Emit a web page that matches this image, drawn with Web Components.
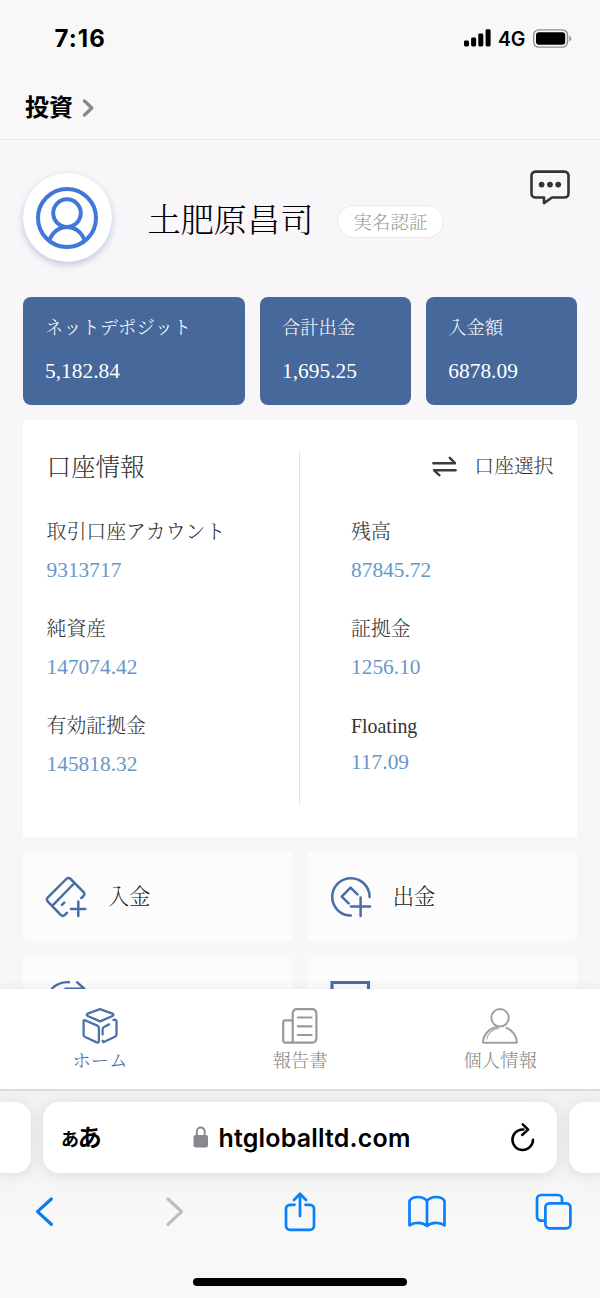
<!DOCTYPE html>
<html lang="ja">
<head>
<meta charset="UTF-8">
<meta name="viewport" content="width=device-width, initial-scale=1.0">
<title>投資</title>
<style>
	html, body {
		margin: 0;
		padding: 0;
	}

	body {
		--serif: "Liberation Serif", "Noto Serif CJK JP", "Noto Sans CJK JP", serif;
		--sans: Inter, "Noto Sans CJK JP", sans-serif;
		--blue: #47689b;
		--link: #6697c8;
		--ink: #333;
		width: 600px;
		height: 1298px;
		overflow: hidden;
		background: #f8f6f8;
		font-family: var(--serif);
	}
</style>
</head>
<body>

<phone-screen>
	<status-bar slot="top" time="7:16" network="4G"></status-bar>
	<app-crumb slot="top">投資</app-crumb>

	<profile-header name="土肥原昌司" badge="実名認証"></profile-header>

	<stat-row>
		<stat-card label="ネットデポジット">5,182.84</stat-card>
		<stat-card label="合計出金">1,695.25</stat-card>
		<stat-card label="入金額">6878.09</stat-card>
	</stat-row>

	<account-panel heading="口座情報" action="口座選択">
		<account-field slot="left" label="取引口座アカウント">9313717</account-field>
		<account-field slot="left" label="純資産">147074.42</account-field>
		<account-field slot="left" label="有効証拠金">145818.32</account-field>
		<account-field slot="right" label="残高">87845.72</account-field>
		<account-field slot="right" label="証拠金">1256.10</account-field>
		<account-field slot="right" label="Floating" latin>117.09</account-field>
	</account-panel>

	<action-grid>
		<action-card icon="deposit">入金</action-card>
		<action-card icon="withdraw">出金</action-card>
		<action-card icon="transfer"></action-card>
		<action-card icon="screen"></action-card>
	</action-grid>

	<tab-bar slot="bottom">
		<tab-item icon="cube" active>ホーム</tab-item>
		<tab-item icon="report">報告書</tab-item>
		<tab-item icon="person">個人情報</tab-item>
	</tab-bar>
	<browser-bar slot="bottom" url="htgloballtd.com"></browser-bar>
</phone-screen>

<script>
const ICONS = {
	signal: [27, 18, `<g fill="#000"><rect x="0" y="11.5" width="5" height="6" rx="1.4"/><rect x="7.1" y="8.5" width="5" height="9" rx="1.4"/><rect x="14.3" y="4.5" width="5" height="13" rx="1.4"/><rect x="21.6" y="0.3" width="5" height="17.2" rx="1.4"/></g>`],
	battery: [39, 19, `<rect x=".7" y=".9" width="33.8" height="17.2" rx="5" stroke="#8f8f8f" stroke-width="1.4"/><rect x="3" y="3.2" width="29.2" height="12.6" rx="3" fill="#000"/><path d="M36.3 6.7v5.6c2.6-.9 2.6-4.7 0-5.6z" fill="#8f8f8f"/>`],
	crumb: [13, 18, `<path d="M2.5 2 9.8 9l-7.3 7" stroke="#8a8a8a" stroke-width="3.3"/>`],
	chat: [40, 35, `<path d="M5.5 1.6h29a4 4 0 0 1 4 4v17.9a4 4 0 0 1-4 4H22l-8 5.6v-5.6H5.5a4 4 0 0 1-4-4V5.6a4 4 0 0 1 4-4z" stroke="#353335" stroke-width="2.6"/><g fill="#353335"><circle cx="11.6" cy="14.6" r="2.9"/><circle cx="20" cy="14.6" r="2.9"/><circle cx="28.2" cy="14.6" r="2.9"/></g>`],
	avatar: [62, 62, `<g stroke="#4078da" stroke-width="4"><circle cx="31" cy="31" r="29"/><circle cx="31" cy="26.1" r="13.8"/><path d="M13.2 53.5C20 35.5 42 35.5 48.8 53.5"/></g>`],
	swap: [25, 21, `<path d="M1.3 7.2H23L17.8 1.8M23.7 14.3H2l5.5 5" stroke="#3d3d3d" stroke-width="2.4"/>`],
	deposit: [42, 42, `<g stroke="#4a6da5" stroke-width="2.5"><path d="M36.4 22 38.6 19.800a2.600 2.600 0 0 0 0-3.700L25.600 3a3 3 0 0 0-4.300 0L2.900 21.300a3 3 0 0 0 0 4.200L15.700 38.800a3 3 0 0 0 4.200 0l2-2M29 7.500 8.200 28.800M17 28.800l2.200-2.200M33.300 25.400V40M26 33h14.300"/></g>`],
	withdraw: [42, 42, `<g stroke="#4a6da5" stroke-width="2.5"><path d="M20.800 39.600A18.700 18.700 0 1 1 39.600 21M27.500 18.300 20.500 11.600l-8.800 9 7 6.800M30.600 21.500v18.400M21 30.600h19"/></g>`],
	transfer: [42, 42, `<g stroke="#4a6da5" stroke-width="2.400"><path d="M7 8.500C11.500 4 17 1.900 24 2.200M32 2.200l7.300 6.400H20.500M40 26c-3 10-11 14-18 13.800M13 39.800l-8-7h21"/></g>`],
	screen: [42, 42, `<path d="M2 40V2.500h36.500V40" stroke="#4a6da5" stroke-width="3.200" stroke-linecap="butt" stroke-linejoin="miter"/>`],
	cube: [36, 36, `<g stroke="#4d71a9" stroke-width="2.300"><path d="M18 1.200 30.500 5.600c1.300.5 1.300 1.800 0 2.400L18.200 13.400 5.700 8C4.400 7.400 4.400 6.100 5.700 5.600zM3 12.200 15.300 17.600c1 .5 1.600 1.300 1.600 2.500V33c0 1.400-1 1.900-2.200 1.400L3.200 29c-1-.5-1.600-1.200-1.600-2.300V13.200c0-1 .6-1.400 1.400-1zM31.500 12l1-.3c1.200-.1 2 .5 2 1.700v13.100c0 1-.6 1.800-1.600 2.300L21.400 34.300l-.8-1.500M20.600 26.500v-5c0-1.400.6-2.200 1.800-2.800l4.600-2.300"/></g>`],
	report: [36, 36, `<g stroke="#999" stroke-width="2.200"><path d="M10.700 34.600V5.200a4 4 0 0 1 4-4h15.700a4 4 0 0 1 4 4v25.400a4 4 0 0 1-4 4H3.200a2 2 0 0 1-2-2V14.300a2 2 0 0 1 2-2h7.500M15.800 9.500h13.700M15.800 18.300h13.700M15.800 27h13.700"/></g>`],
	person: [36, 36, `<g stroke="#a0a0a0" stroke-width="2"><circle cx="18" cy="9.800" r="8.700"/><path d="M15.500 18.800C7 20 1.300 27 1 34q0 .7.800.7h32.400q.8 0 .7-.7C34.600 28.500 30.500 22 24.500 20"/><path d="M4.800 31c.5-5 5.500-9.800 12-10.700" stroke-width="1.100"/></g>`],
	lock: [16, 22, `<rect x=".5" y="9" width="14.500" height="12.500" rx="2.300" fill="#88888c"/><path d="M3.800 9V5.500a3.950 3.950 0 0 1 7.900 0V9" stroke="#88888c" stroke-width="1.900"/>`],
	reload: [24, 30, `<path d="M12.400 6.400h-.9A10.300 10.300 0 1 0 22 16.700M11.800 1.400l5.300 5.200-5.900 5.400" stroke="#000" stroke-width="2.500"/>`],
	back: [20, 32, `<path d="M17.300 3 3.500 15.600l13.800 12.700" stroke="#0a7aef" stroke-width="3.200"/>`],
	forward: [20, 32, `<path d="m3 3 13.600 12.600L3 28.300" stroke="#bcbcbe" stroke-width="3.200"/>`],
	share: [32, 40, `<path d="M10.500 12.800H6a4 4 0 0 0-4 4v17a4 4 0 0 0 4 4h20a4 4 0 0 0 4-4v-17a4 4 0 0 0-4-4h-4.500M16 24V2M10 8l6-6.300L22 8" stroke="#0a80fa" stroke-width="2.700"/>`],
	book: [40, 34, `<path d="M20 31V6C16 .8 6 .6 2.500 5.800v24.500c5-3.700 13.200-3.200 17.500.7 4.300-3.900 12.500-4.400 17.500-.7V5.800C34 .6 24 .8 20 6" stroke="#0a80fa" stroke-width="2.700"/>`],
	tabs: [38, 38, `<path d="M10 27.600H6a4 4 0 0 1-4-4V6a4 4 0 0 1 4-4h17a4 4 0 0 1 4 4v3.500" stroke="#0a80fa" stroke-width="2.700"/><rect x="10.400" y="10.300" width="25" height="25" rx="4" stroke="#0a80fa" stroke-width="2.700"/>`]
};

// Shared base: renders template() in an open shadow root
class BaseElement extends HTMLElement {
	connectedCallback() {
		if (this.shadowRoot) return;
		this.attachShadow({ mode: 'open' }).innerHTML = this.template();
	}

	attr(name) {
		return this.getAttribute(name) || '';
	}
}

class UiIcon extends BaseElement {
	template() {
		const [w, h, body] = ICONS[this.attr('name')];
		return `
		<style>
			:host { display: block; flex: none; width: ${w}px; height: ${h}px; }
			svg { display: block; }
		</style>
		<svg width="${w}" height="${h}" viewBox="0 0 ${w} ${h}" fill="none" stroke-linecap="round" stroke-linejoin="round">${body}</svg>`;
	}
}

class PhoneScreen extends BaseElement {
	template() {
		return `
		<style>
			:host { display: flex; flex-direction: column; width: 600px; height: 1298px; }
			header { flex: none; height: 139px; background: #f9f8f9; border-bottom: 1px solid #e8e7e9; }
			main {
				flex: 1;
				min-height: 0;
				overflow: hidden;
				box-sizing: border-box;
				padding: 0 23px;
				display: flex;
				flex-direction: column;
			}
			footer { flex: none; position: relative; }
		</style>
		<header><slot name="top"></slot></header>
		<main><slot></slot></main>
		<footer><slot name="bottom"></slot></footer>`;
	}
}

class StatusBar extends BaseElement {
	template() {
		return `
		<style>
			:host { display: flex; align-items: center; height: 76px; padding: 0 28px 0 54.500px; font-family: var(--sans); color: #000; }
			.time { flex: 1; margin-top: 1px; font-size: 24px; font-weight: 700; letter-spacing: 1.100px; }
			.net { font-size: 19.500px; font-weight: 600; margin: 2px 8px 0 7px; letter-spacing: -.3px; }
		</style>
		<span class="time">${this.attr('time')}</span>
		<ui-icon name="signal"></ui-icon>
		<span class="net">${this.attr('network')}</span>
		<ui-icon name="battery"></ui-icon>`;
	}
}

class AppCrumb extends BaseElement {
	template() {
		return `
		<style>
			:host { display: flex; align-items: center; gap: 9px; height: 63px; padding-left: 25px; font: 700 24px/36px var(--sans); color: #000; }
			ui-icon { margin-top: 1px; }
		</style>
		<span><slot></slot></span>
		<ui-icon name="crumb"></ui-icon>`;
	}
}

class ProfileHeader extends BaseElement {
	template() {
		return `
		<style>
			:host { display: flex; flex: none; height: 157px; }
			.avatar {
				display: flex;
				align-items: center;
				justify-content: center;
				width: 89px;
				height: 89px;
				margin: 33px 36px 0 -.5px;
				border-radius: 50%;
				background: #fff;
				box-shadow: 0 3px 7px rgba(60, 90, 160, .3);
			}
			h1 { margin: 56px 23.500px 0 0; font-size: 33.200px; line-height: 50px; font-weight: 300; color: #000; white-space: nowrap; }
			.badge {
				box-sizing: border-box;
				width: 107px;
				height: 33px;
				margin-top: 65px;
				border: 1px solid #e8e8ea;
				border-radius: 17px;
				background: #fff;
				font-size: 18.500px;
				line-height: 34px;
				font-weight: 300;
				text-align: center;
				color: #999;
			}
			.chat { margin: 30px 7px 0 auto; }
		</style>
		<div class="avatar"><ui-icon name="avatar"></ui-icon></div>
		<h1>${this.attr('name')}</h1>
		<span class="badge">${this.attr('badge')}</span>
		<ui-icon class="chat" name="chat"></ui-icon>`;
	}
}

class StatRow extends BaseElement {
	template() {
		return `
		<style>
			:host { display: grid; flex: none; grid-template-columns: 221.500px 150.700px 150.700px; justify-content: space-between; }
		</style>
		<slot></slot>`;
	}
}

class StatCard extends BaseElement {
	template() {
		return `
		<style>
			:host {
				display: block;
				box-sizing: border-box;
				height: 107.500px;
				padding: 16px 0 0 22px;
				border-radius: 8px;
				background: var(--blue);
				color: #fff;
				white-space: nowrap;
			}
			.label { font-size: 18.300px; line-height: 30px; font-weight: 300; }
			.value { margin-top: 13px; font-size: 21.400px; line-height: 30px; }
		</style>
		<div class="label">${this.attr('label')}</div>
		<div class="value"><slot></slot></div>`;
	}
}

class AccountPanel extends BaseElement {
	template() {
		return `
		<style>
			:host {
				display: grid;
				flex: none;
				grid-template-columns: 276px 1fr;
				box-sizing: border-box;
				height: 417px;
				margin-top: 15.500px;
				padding: 31px 23.500px 31px 23.500px;
				background: #fff;
				color: var(--ink);
				font-weight: 300;
			}
			.left { box-sizing: border-box; width: 253px; height: 355px; border-right: 1.500px solid #e3e5ed; }
			.right { padding-left: 28.500px; }
			.head { display: flex; align-items: center; height: 31px; margin-bottom: 34px; }
			h2 { margin: 1px 0 0; font-size: 24.500px; line-height: 31px; font-weight: 300; }
			.right .head { justify-content: flex-end; gap: 17px; font-size: 19.800px; line-height: 29px; }
		</style>
		<div class="left">
			<div class="head"><h2>${this.attr('heading')}</h2></div>
			<slot name="left"></slot>
		</div>
		<div class="right">
			<div class="head"><ui-icon name="swap"></ui-icon><span>${this.attr('action')}</span></div>
			<slot name="right"></slot>
		</div>`;
	}
}

class AccountField extends BaseElement {
	template() {
		return `
		<style>
			:host { display: block; height: 97px; white-space: nowrap; }
			.label { font-size: 19.900px; line-height: 32px; }
			.value { margin-top: 7px; font-size: 21.400px; line-height: 30px; color: var(--link); font-weight: 400; }
			:host([latin]) .value { margin-top: 5px; }
		</style>
		<div class="label">${this.attr('label')}</div>
		<div class="value"><slot></slot></div>`;
	}
}

class ActionGrid extends BaseElement {
	template() {
		return `
		<style>
			:host { display: grid; flex: none; grid-template-columns: 1fr 1fr; gap: 15.500px; margin-top: 15px; }
		</style>
		<slot></slot>`;
	}
}

class ActionCard extends BaseElement {
	template() {
		return `
		<style>
			:host {
				display: flex;
				align-items: center;
				gap: 21px;
				height: 89px;
				padding-left: 22px;
				border-radius: 4px;
				background: #fdfcfd;
				color: #222;
				font-size: 21.300px;
				line-height: 32px;
				font-weight: 300;
			}
		</style>
		<ui-icon name="${this.attr('icon')}"></ui-icon>
		<span><slot></slot></span>`;
	}
}

class TabBar extends BaseElement {
	template() {
		return `
		<style>
			:host {
				display: grid;
				grid-template-columns: repeat(3, 1fr);
				height: 100px;
				background: #fff;
				border-bottom: 2px solid #dcdcdd;
				box-shadow: 0 -1px 12px rgba(0, 0, 0, .06);
			}
		</style>
		<slot></slot>`;
	}
}

class TabItem extends BaseElement {
	template() {
		return `
		<style>
			:host {
				display: flex;
				flex-direction: column;
				align-items: center;
				gap: 2px;
				padding-top: 19px;
				color: #888;
				font-size: 18.400px;
				line-height: 30px;
				font-weight: 300;
			}
			:host([active]) { color: var(--blue); }
		</style>
		<ui-icon name="${this.attr('icon')}"></ui-icon>
		<span><slot></slot></span>`;
	}
}

class BrowserBar extends BaseElement {
	template() {
		return `
		<style>
			:host {
				display: flex;
				flex-direction: column;
				height: 207px;
				overflow: hidden;
				background: linear-gradient(#f2f2f3, #f4f4f5 80px, #f9f8f9 125px);
				font-family: var(--sans);
				color: #000;
			}
			.pages { display: grid; flex: none; grid-template-columns: 31px 514px 31px; justify-content: space-between; height: 71px; margin-top: 11px; }
			.pages > div { background: #fff; box-shadow: 0 2px 14px rgba(0, 0, 0, .1); }
			.prev { border-radius: 0 16px 16px 0; }
			.next { border-radius: 16px 0 0 16px; }
			.address { display: flex; align-items: center; box-sizing: border-box; padding: 0 22px 0 18px; border-radius: 16px; }
			.aa { width: 132px; margin-top: 2px; font-weight: 700; font-size: 24px; line-height: 30px; letter-spacing: -1.200px; }
			.aa small { font-size: 18px; }
			.url { display: flex; flex: 1; align-items: center; gap: 9.500px; font-size: 25px; line-height: 30px; font-weight: 600; letter-spacing: .18px; }
			.url ui-icon { margin-top: -1px; }
			.tools { display: flex; flex: none; align-items: center; height: 78px; padding-left: 34px; }
			.tools ui-icon:nth-child(2) { margin-left: 111px; }
			.tools ui-icon:nth-child(3) { margin-left: 98.500px; }
			.tools ui-icon:nth-child(4) { margin-left: 91px; }
			.tools ui-icon:nth-child(5) { margin-left: 88px; }
			.home { flex: none; width: 214px; height: 8px; margin: 27px auto 0; border-radius: 4px; background: #000; }
		</style>
		<div class="pages">
			<div class="prev"></div>
			<div class="address">
				<span class="aa"><small>あ</small>あ</span>
				<span class="url"><ui-icon name="lock"></ui-icon>${this.attr('url')}</span>
				<ui-icon name="reload"></ui-icon>
			</div>
			<div class="next"></div>
		</div>
		<div class="tools">
			<ui-icon name="back"></ui-icon>
			<ui-icon name="forward"></ui-icon>
			<ui-icon name="share"></ui-icon>
			<ui-icon name="book"></ui-icon>
			<ui-icon name="tabs"></ui-icon>
		</div>
		<div class="home"></div>`;
	}
}

// Register the custom elements
customElements.define('ui-icon', UiIcon);
customElements.define('phone-screen', PhoneScreen);
customElements.define('status-bar', StatusBar);
customElements.define('app-crumb', AppCrumb);
customElements.define('profile-header', ProfileHeader);
customElements.define('stat-row', StatRow);
customElements.define('stat-card', StatCard);
customElements.define('account-panel', AccountPanel);
customElements.define('account-field', AccountField);
customElements.define('action-grid', ActionGrid);
customElements.define('action-card', ActionCard);
customElements.define('tab-bar', TabBar);
customElements.define('tab-item', TabItem);
customElements.define('browser-bar', BrowserBar);
</script>
</body>
</html>
